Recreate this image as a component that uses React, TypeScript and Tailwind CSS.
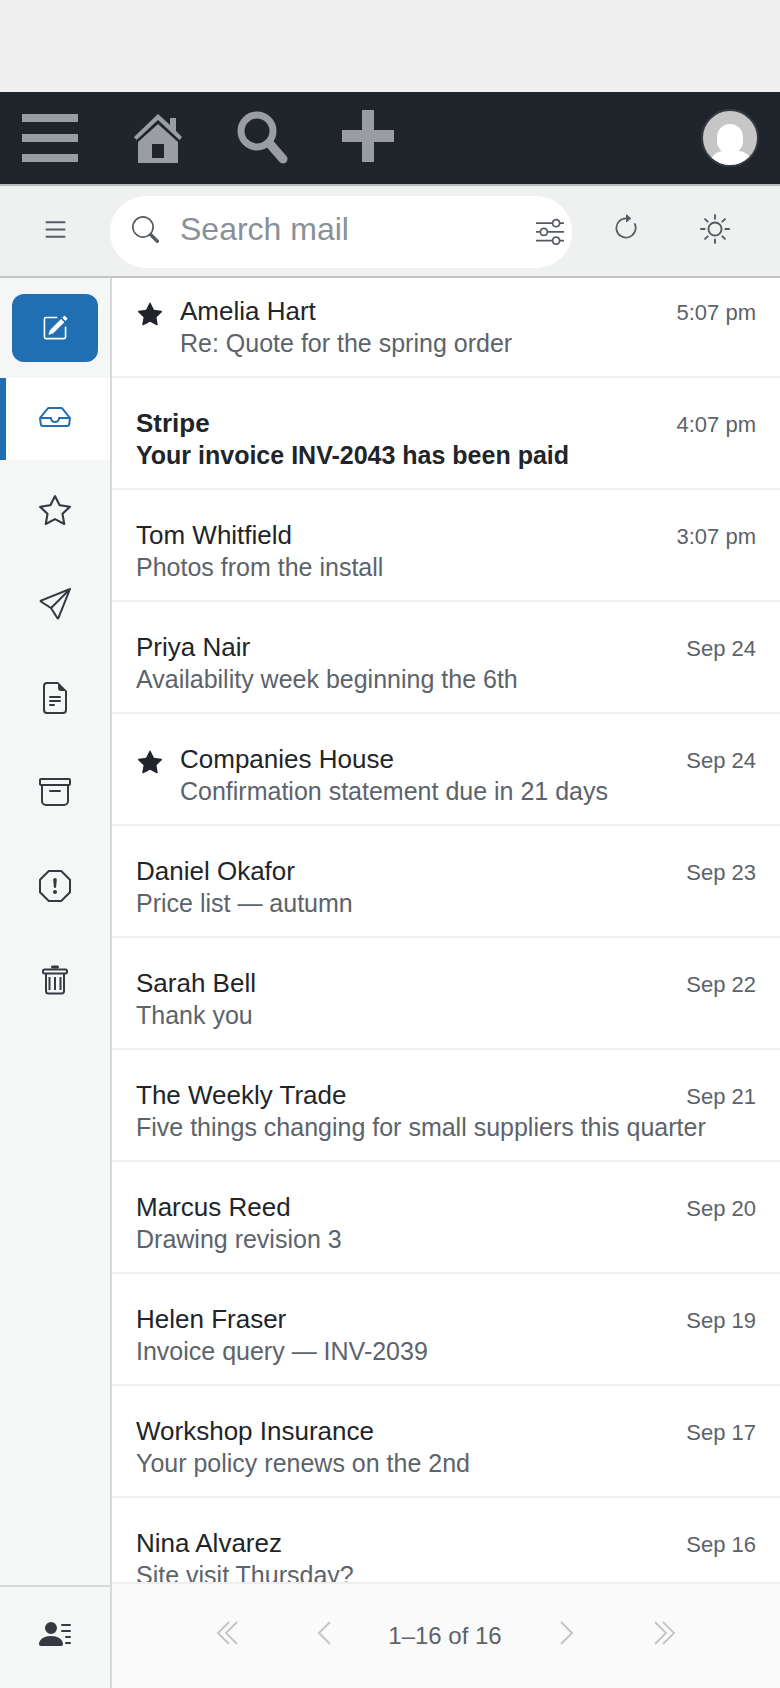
import {
  BsList,
  BsSearch,
  BsSliders,
  BsArrowClockwise,
  BsSun,
  BsPencilSquare,
  BsInbox,
  BsStar,
  BsStarFill,
  BsSend,
  BsFileEarmarkText,
  BsArchive,
  BsExclamationOctagon,
  BsPersonLinesFill,
} from "react-icons/bs";

const messages = [
  { name: "Amelia Hart", subject: "Re: Quote for the spring order", time: "5:07 pm", starred: true },
  { name: "Stripe", subject: "Your invoice INV-2043 has been paid", time: "4:07 pm", unread: true },
  { name: "Tom Whitfield", subject: "Photos from the install", time: "3:07 pm" },
  { name: "Priya Nair", subject: "Availability week beginning the 6th", time: "Sep 24" },
  { name: "Companies House", subject: "Confirmation statement due in 21 days", time: "Sep 24", starred: true },
  { name: "Daniel Okafor", subject: "Price list — autumn", time: "Sep 23" },
  { name: "Sarah Bell", subject: "Thank you", time: "Sep 22" },
  { name: "The Weekly Trade", subject: "Five things changing for small suppliers this quarter", time: "Sep 21" },
  { name: "Marcus Reed", subject: "Drawing revision 3", time: "Sep 20" },
  { name: "Helen Fraser", subject: "Invoice query — INV-2039", time: "Sep 19" },
  { name: "Workshop Insurance", subject: "Your policy renews on the 2nd", time: "Sep 17" },
  { name: "Nina Alvarez", subject: "Site visit Thursday?", time: "Sep 16" },
];

function TrashIcon() {
  return (
    <svg width="32" height="32" viewBox="0 0 32 32" fill="none" stroke="currentColor" strokeWidth="2">
      <rect x="12" y="1.5" width="8" height="3" rx="1.5" fill="currentColor" stroke="none" />
      <rect x="4" y="5.5" width="24" height="4" rx="1.5" />
      <path d="M7 10V27a2.5 2.5 0 0 0 2.5 2.5H22.5A2.5 2.5 0 0 0 25 27V10" />
      <path d="M10.5 13V26M16 13V26M21.5 13V26" />
    </svg>
  );
}

function Chevron({ d, width, className }: { d: string; width: number; className?: string }) {
  return (
    <svg className={className} width={width} height="24" viewBox={`0 0 ${width} 24`} fill="none" stroke="currentColor" strokeWidth="2">
      <path d={d} />
    </svg>
  );
}

const sideIcons = [
  <BsStar size={32} />,
  <BsSend size={32} />,
  <BsFileEarmarkText size={32} />,
  <BsArchive size={32} />,
  <BsExclamationOctagon size={32} />,
  <TrashIcon />,
];

function Navbar() {
  return (
    <div className="h-[94px] shrink-0 bg-[#1f252b] border-b-2 border-[#b9bbbc] flex items-center pl-[22px] pr-[20px] text-[#9a9ea3]">
      <div className="w-[56px] flex flex-col gap-3">
        <div className="h-2 bg-[#9a9ea3]" />
        <div className="h-2 bg-[#9a9ea3]" />
        <div className="h-2 bg-[#9a9ea3]" />
      </div>
      <svg className="ml-[55px]" width="50" height="50" viewBox="0 0 50 50" fill="currentColor">
        <path d="M25 1 L37 12 V5 H43 V18 L49 24 L46.5 27 L25 7 L3.5 27 L1 24 Z" />
        <path fillRule="evenodd" d="M25 11 L45 29 V50 H5 V29 Z M19 31 V45 H31 V31 Z" />
      </svg>
      <svg className="ml-[54px]" width="52" height="54" viewBox="0 0 52 54" fill="none">
        <circle cx="20" cy="20" r="16" stroke="currentColor" strokeWidth="7" />
        <path d="M33 33 L46 48" stroke="currentColor" strokeWidth="9" strokeLinecap="round" />
      </svg>
      <div className="ml-[53px] relative w-[52px] h-[52px] -mt-[4px]">
        <div className="absolute left-0 right-0 top-[20px] h-[12px] bg-[#9a9ea3]" />
        <div className="absolute top-0 bottom-0 left-[20px] w-[12px] bg-[#9a9ea3]" />
      </div>
      <div className="ml-auto mr-[1px] w-[58px] h-[58px] rounded-full border-2 border-[#343a40] bg-[#c6c6c6] overflow-hidden relative">
        <div className="absolute left-[14px] top-[13px] w-[26px] h-[30px] rounded-full bg-white" />
        <div className="absolute left-[6px] top-[40px] w-[44px] h-[30px] rounded-full bg-white" />
      </div>
    </div>
  );
}

function Toolbar() {
  return (
    <div className="h-[92px] shrink-0 bg-[#eff0f0] border-b-2 border-[#c4c6c7] flex items-center pt-[2px] text-[#555b61]">
      <div className="w-[110px] flex justify-center mb-[6px]">
        <BsList size={29} />
      </div>
      <div className="w-[462px] h-[72px] bg-white rounded-[36px] flex items-center pl-[22px] pr-[7px]">
        <BsSearch size={27} className="mb-[6px]" />
        <span className="ml-[21px] mb-[6px] text-[32px] text-[#8a9097]">Search mail</span>
        <BsSliders size={28} className="ml-auto mr-[1px] mb-[2px]" />
      </div>
      <BsArrowClockwise size={28} className="ml-[40px] mb-[8px]" />
      <BsSun size={30} className="ml-[60px] mb-[6px]" />
    </div>
  );
}

function Sidebar() {
  return (
    <div className="w-[112px] shrink-0 bg-[#f5f7f7] border-r-2 border-[#d6d8d9] flex flex-col">
      <div className="h-[100px] shrink-0 pt-4 pl-3">
        <div className="w-[86px] h-[68px] rounded-xl bg-[#1f6fb2] flex items-center justify-center text-white">
          <BsPencilSquare size={26} />
        </div>
      </div>
      <div className="h-[82px] shrink-0 bg-white border-l-[6px] border-[#1f6fb2] flex items-center justify-center pr-[6px] pb-[5px] text-[#1f6fb2]">
        <BsInbox size={32} />
      </div>
      <div className="flex flex-col items-center pt-[34px] gap-[62px] text-[#343a40]">
        {sideIcons.map((icon, i) => (
          <div key={i}>{icon}</div>
        ))}
      </div>
      <div className="mt-auto h-[103px] shrink-0 border-t-2 border-[#d6d8d9] flex items-center justify-center pb-2 text-[#343a40]">
        <BsPersonLinesFill size={32} />
      </div>
    </div>
  );
}

function MessageRow({ m }: { m: (typeof messages)[number] }) {
  return (
    <div className="h-[112px] shrink-0 border-b-2 border-[#eceeef] flex items-start pl-[24px] pr-[24px] pt-[29px]">
      {m.starred && <BsStarFill size={24} className="shrink-0 mt-[7px] ml-[2px] mr-[18px] text-[#212529]" />}
      <div className="min-w-0 flex-1">
        <div className={`text-[26px] leading-[32px] text-[#212529] ${m.unread ? "font-bold" : ""}`}>{m.name}</div>
        <div className={`text-[25px] leading-[32px] whitespace-nowrap ${m.unread ? "font-bold text-[#212529]" : "text-[#5c636a]"}`}>{m.subject}</div>
      </div>
      <div className="pt-[2px] text-[22px] leading-[32px] text-[#5c636a] shrink-0">{m.time}</div>
    </div>
  );
}

function Pager() {
  return (
    <div className="h-[106px] shrink-0 bg-[#fafafa] border-t-2 border-[#eceeef] flex items-center justify-center text-[#c4c6c7]">
      <Chevron width={22} d="M13 1 L2 12 L13 23 M21 1 L10 12 L21 23" className="mb-[6px]" />
      <Chevron width={14} d="M13 1 L2 12 L13 23" className="ml-[79px] mb-[6px]" />
      <span className="ml-[57px] mr-[58px] text-[24px] text-[#5c636a]">1–16 of 16</span>
      <Chevron width={14} d="M1 1 L12 12 L1 23" className="mb-[6px]" />
      <Chevron width={22} d="M1 1 L12 12 L1 23 M9 1 L20 12 L9 23" className="ml-[80px] mb-[6px]" />
    </div>
  );
}

export default function App() {
  return (
    <div className="w-[780px] h-[1688px] overflow-hidden bg-[#efefef] flex flex-col pt-[92px] font-['Liberation_Sans',sans-serif]">
      <Navbar />
      <Toolbar />
      <div className="flex-1 flex min-h-0">
        <Sidebar />
        <div className="flex-1 min-w-0 flex flex-col bg-white">
          <div className="flex-1 min-h-0 overflow-hidden">
            <div className="-mt-3 flex flex-col">
              {messages.map((m) => (
                <MessageRow key={m.name} m={m} />
              ))}
            </div>
          </div>
          <Pager />
        </div>
      </div>
    </div>
  );
}
